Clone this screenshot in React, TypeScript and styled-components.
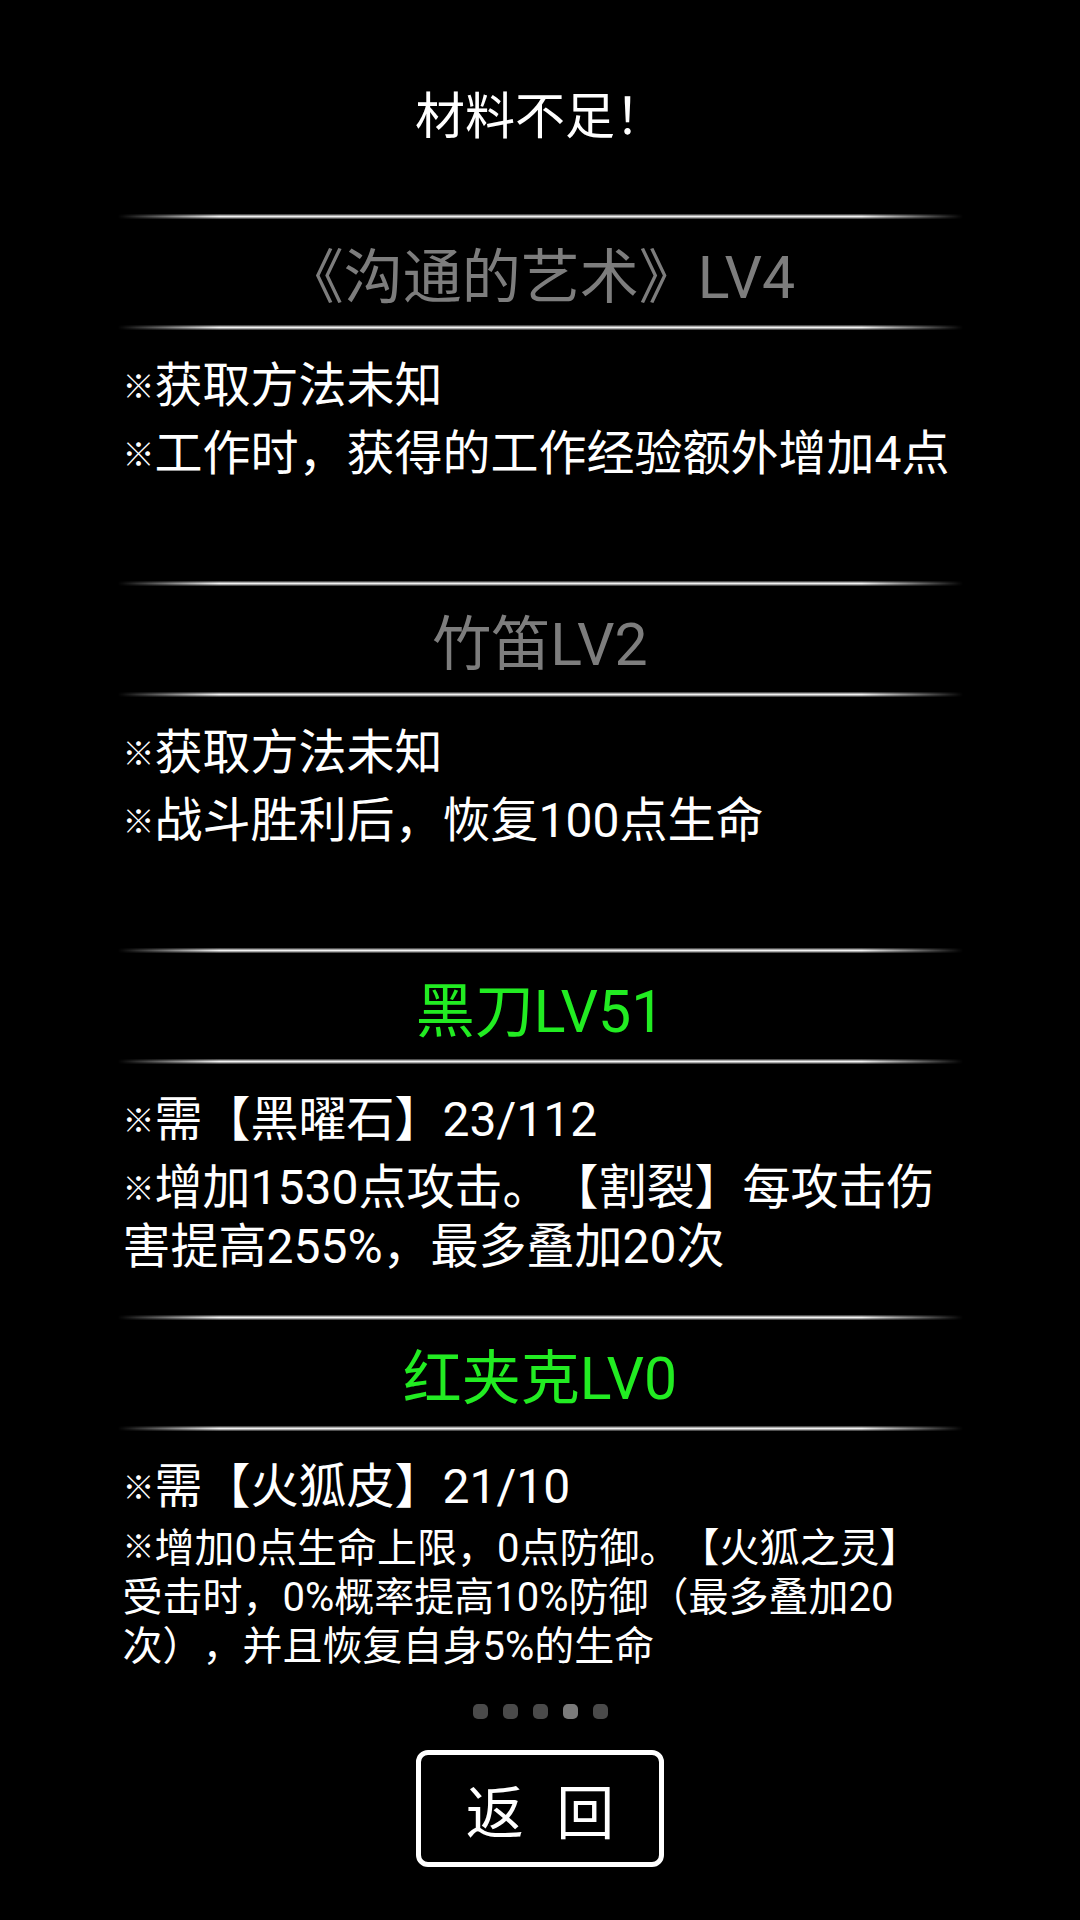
import React from 'react'
import { styled, createGlobalStyle } from 'styled-components'

const GlobalStyle = createGlobalStyle`
    html, body {
        margin: 0;
        padding: 0;
        background: #000;
    }
    body {
        font-family: Roboto, "Noto Sans CJK SC", sans-serif;
        color: #fff;
        text-spacing-trim: space-all;
    }
`

const Page = styled.div`
    width: 1080px;
    height: 1920px;
    background: #000;
    display: flex;
    flex-direction: column;
    align-items: center;
    padding-top: 86px;
    box-sizing: border-box;
    overflow: hidden;
`

const Title = styled.h1`
    margin: 0;
    font-weight: 400;
    font-size: 50px;
    line-height: 62px;
    color: #fff;
    text-align: center;
`

const List = styled.div`
    margin-top: 67px;
    width: 845px;
    display: flex;
    flex-direction: column;
`

const Item = styled.section`
    height: 367px;
    display: flex;
    flex-direction: column;
`

const Divider = styled.div`
    height: 5px;
    margin: -1px 0;
    background: linear-gradient(
        to bottom,
        rgba(120, 120, 120, 0.3) 0%,
        #a8a8a8 30%,
        #f2f2f2 50%,
        #a8a8a8 70%,
        rgba(120, 120, 120, 0.3) 100%
    );
    -webkit-mask-image: linear-gradient(to right, transparent 0%, #000 12%, #000 88%, transparent 100%);
    mask-image: linear-gradient(to right, transparent 0%, #000 12%, #000 88%, transparent 100%);
`

const Heading = styled.h2<{ $color: string }>`
    margin: 0;
    height: 108px;
    display: flex;
    align-items: center;
    justify-content: center;
    font-weight: 400;
    font-size: 59px;
    color: ${p => p.$color};
`

const Body = styled.div`
    flex: 1;
    padding: 26px 9px 0 5px;
    display: flex;
    flex-direction: column;
`

const Para = styled.p<{ $size: number; $gap: number }>`
    margin: 0;
    margin-top: ${p => p.$gap}px;
    font-size: ${p => p.$size}px;
    line-height: ${p => Math.round(p.$size * 1.23)}px;
    color: #fff;
    &:first-child {
        margin-top: 0;
    }
`

const Mark = styled.span`
    font-family: "Noto Sans CJK SC", sans-serif;
    font-weight: 700;
    font-size: 32px;
    vertical-align: 4px;
`

const Dots = styled.div`
    margin-top: 21px;
    display: flex;
    gap: 15px;
`

const Dot = styled.span<{ $active?: boolean }>`
    width: 15px;
    height: 15px;
    border-radius: 5px;
    background: ${p => (p.$active ? '#7a7a7a' : '#4a4a4a')};
`

const BackButton = styled.button`
    margin-top: 31px;
    width: 248px;
    height: 117px;
    box-sizing: border-box;
    border: 5px solid #fff;
    border-radius: 12px;
    background: #000;
    color: #fff;
    font-family: Roboto, "Noto Sans CJK SC", sans-serif;
    font-size: 58px;
    letter-spacing: 9px;
    padding: 0 0 0 9px;
    cursor: pointer;
`

const GRAY = '#7d7d7d'
const GREEN = '#22ec22'

type Line = { text: string; size?: number; gap?: number }

const items: { name: string; color: string; lines: Line[] }[] = [
    {
        name: '《沟通的艺术》LV4',
        color: GRAY,
        lines: [{ text: '获取方法未知' }, { text: '工作时，获得的工作经验额外增加4点' }],
    },
    {
        name: '竹笛LV2',
        color: GRAY,
        lines: [{ text: '获取方法未知' }, { text: '战斗胜利后，恢复100点生命' }],
    },
    {
        name: '黑刀LV51',
        color: GREEN,
        lines: [
            { text: '需【黑曜石】23/112' },
            { text: '增加1530点攻击。【割裂】每攻击伤害提高255%，最多叠加20次' },
        ],
    },
    {
        name: '红夹克LV0',
        color: GREEN,
        lines: [
            { text: '需【火狐皮】21/10' },
            {
                text: '增加0点生命上限，0点防御。【火狐之灵】受击时，0%概率提高10%防御（最多叠加20次），并且恢复自身5%的生命',
                size: 40,
                gap: 4,
            },
        ],
    },
]

const App: React.FC = () => {
    return (
        <>
            <GlobalStyle />
            <Page>
                <Title>材料不足！</Title>
                <List>
                    {items.map(item => (
                        <Item key={item.name}>
                            <Divider />
                            <Heading $color={item.color}>{item.name}</Heading>
                            <Divider />
                            <Body>
                                {item.lines.map(line => (
                                    <Para key={line.text} $size={line.size ?? 48} $gap={line.gap ?? 8}>
                                        <Mark>※</Mark>
                                        {line.text}
                                    </Para>
                                ))}
                            </Body>
                        </Item>
                    ))}
                </List>
                <Dots>
                    <Dot />
                    <Dot />
                    <Dot />
                    <Dot $active />
                    <Dot />
                </Dots>
                <BackButton>返 回</BackButton>
            </Page>
        </>
    )
}

export default App
